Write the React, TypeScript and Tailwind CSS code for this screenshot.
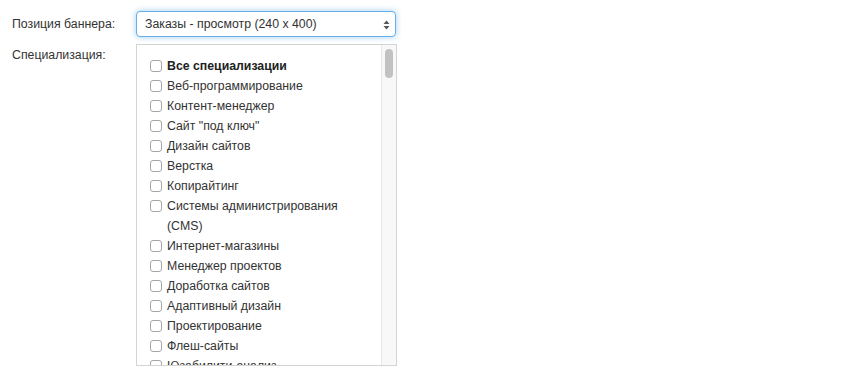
import React, { useState } from "react";

const specializations = [
  "Веб-программирование",
  "Контент-менеджер",
  'Сайт "под ключ"',
  "Дизайн сайтов",
  "Верстка",
  "Копирайтинг",
  "Системы администрирования (CMS)",
  "Интернет-магазины",
  "Менеджер проектов",
  "Доработка сайтов",
  "Адаптивный дизайн",
  "Проектирование",
  "Флеш-сайты",
  "Юзабилити-анализ",
  "Тестирование сайтов",
  "Продвижение сайтов",
];

function CheckRow({
  label,
  bold,
  checked,
  onToggle,
}: {
  label: string;
  bold?: boolean;
  checked: boolean;
  onToggle: () => void;
}) {
  return (
    <label className="flex items-start gap-[5px] cursor-pointer leading-[20px]" onClick={onToggle}>
      <span
        className={`mt-[4px] w-[12px] h-[12px] shrink-0 rounded-[3px] border border-[#a6a6a6] bg-white ${
          checked ? "bg-[#3b8de0] border-[#3b8de0]" : ""
        }`}
      />
      <span className={bold ? "font-bold text-[#222]" : "text-[#333]"}>{label}</span>
    </label>
  );
}

export default function App() {
  const [checked, setChecked] = useState<Record<string, boolean>>({});
  const toggle = (key: string) =>
    setChecked(prev => ({ ...prev, [key]: !prev[key] }));

  return (
    <div
      className="w-[847px] h-[380px] bg-white text-[12.3px] text-[#333] pt-[11px]"
      style={{ fontFamily: '"Liberation Sans", Arial, sans-serif' }}
    >
      <div className="flex items-center">
        <div className="w-[136px] pl-[12px]">Позиция баннера:</div>
        <div className="relative w-[260px] h-[26px] rounded-[4px] border border-[#66afe9] shadow-[0_0_6px_rgba(102,175,233,0.6)] bg-white flex items-center pl-[8px]">
          <span>Заказы - просмотр (240 x 400)</span>
          <svg className="absolute right-[5px] top-[8px]" width="7" height="10" viewBox="0 0 7 10">
            <path d="M3.5 0.5 L6.5 4 L0.5 4 Z" fill="#555" />
            <path d="M3.5 9.5 L6.5 6 L0.5 6 Z" fill="#555" />
          </svg>
        </div>
      </div>

      <div className="flex mt-[7px]">
        <div className="w-[136px] pl-[12px] pt-[2px]">Специализация:</div>
        <div className="w-[261px] h-[322px] border border-[#d4d4d4] flex overflow-hidden">
          <div className="flex-1 overflow-hidden pl-[13px] pr-[16px] pt-[11px]">
            <CheckRow
              label="Все специализации"
              bold
              checked={!!checked.all}
              onToggle={() => toggle("all")}
            />
            {specializations.map(s => (
              <CheckRow
                key={s}
                label={s}
                checked={!!checked[s]}
                onToggle={() => toggle(s)}
              />
            ))}
          </div>
          <div className="w-[15px] shrink-0 bg-[#f8f8f8] border-l border-[#e6e6e6] flex justify-center pt-[4px]">
            <div className="w-[8px] h-[29px] rounded-full bg-[#c2c2c2]" />
          </div>
        </div>
      </div>
    </div>
  );
}
